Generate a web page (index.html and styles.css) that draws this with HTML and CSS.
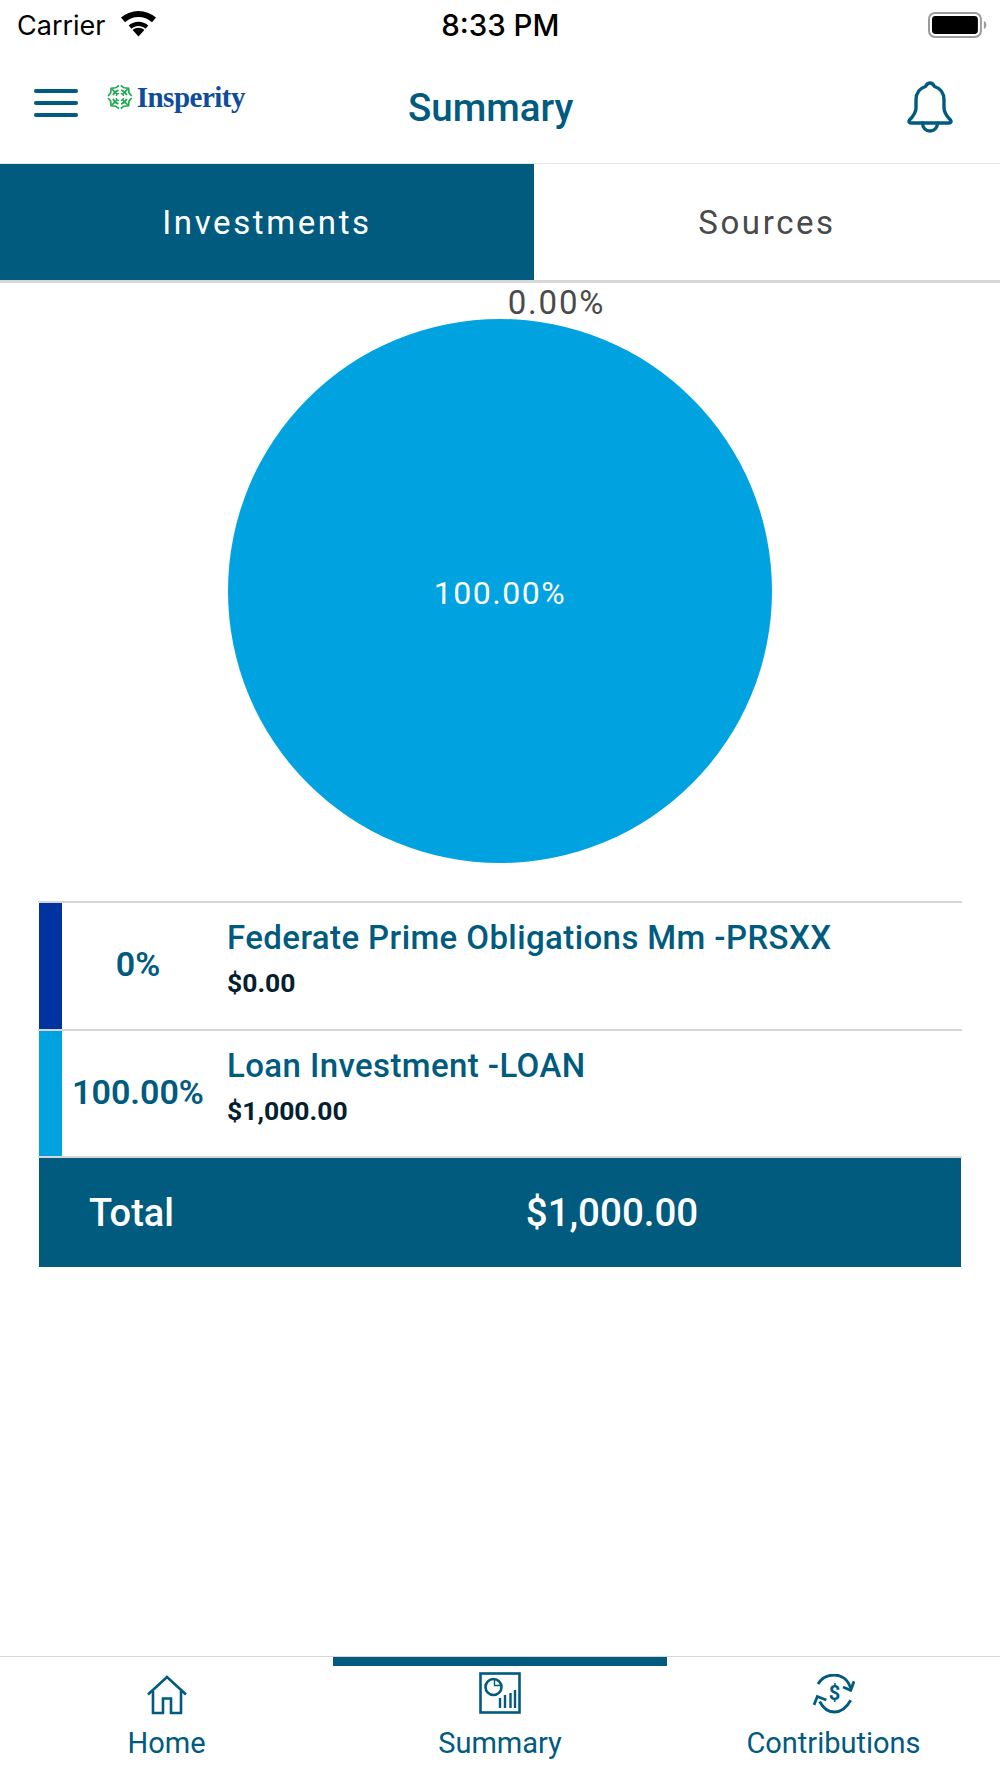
FILE: index.html
```html
<!DOCTYPE html>
<html lang="en">
<head>
    <meta charset="UTF-8">
    <meta name="viewport" content="width=device-width, initial-scale=1.0">
    <title>Summary</title>
    <link rel="stylesheet" href="styles.css">
</head>
<body>
<div class="app">
    <div class="status-bar">
        <div class="carrier">
            <span>Carrier</span>
            <svg class="wifi" width="37" height="27" viewBox="0 0 37 27">
                <path d="M18.5 26.5 L12.6 20 C16 17 21 17 24.4 20 Z" fill="#000"/>
                <path d="M8.7 15.6 C14.5 10.6 22.5 10.6 28.3 15.6 L25.5 18.8 C21.4 15.2 15.6 15.2 11.5 18.8 Z" fill="#000"/>
                <path d="M1 7.6 C11 -1.2 26 -1.2 36 7.6 L32 12.2 C24.4 5.2 12.6 5.2 5 12.2 Z" fill="#000"/>
            </svg>
        </div>
        <div class="clock">8:33 PM</div>
        <svg class="battery" width="60" height="28" viewBox="0 0 60 28">
            <rect x="1" y="2" width="52" height="24" rx="6" fill="#fff" stroke="#9b9b9b" stroke-width="2"/>
            <rect x="4" y="5" width="46" height="18" rx="3.5" fill="#000"/>
            <path d="M56 10 C58 11 58.5 12.5 58.5 14 C58.5 15.5 58 17 56 18 Z" fill="#9b9b9b"/>
        </svg>
    </div>

    <div class="nav-bar">
        <div class="hamburger"><span></span><span></span><span></span></div>
        <div class="logo">
            <svg width="28" height="28" viewBox="0 0 28 28" fill="none" stroke="#1fa84f" stroke-width="1.8">
                <path d="M13 1.500 L9.500 4 L4.500 4.500 L4 9.500 L1.200 13 M15 1.500 L18.500 4 L23.500 4.500 L24 9.500 L26.800 13 M1.200 15 L4 18.500 L4.500 23.500 L9.500 24 L13 26.500 M26.800 15 L24 18.500 L23.500 23.500 L18.500 24 L15 26.500"/>
                <path d="M6.500 12 C7.500 9.500 9.500 7.500 12.500 6.500 M21.500 12 C20.500 9.500 18.500 7.500 15.500 6.500 M6.500 16 C7.500 18.500 9.500 20.500 12.500 21.500 M21.500 16 C20.500 18.500 18.500 20.500 15.500 21.500"/>
                <path d="M5.500 5.500 L11 11 M22.500 5.500 L17 11 M5.500 22.500 L11 17 M22.500 22.500 L17 17"/>
                <path d="M10 13 C10 11.800 11 10.500 13 10 M18 13 C18 11.800 17 10.500 15 10 M10 15 C10 16.200 11 17.500 13 18 M18 15 C18 16.200 17 17.500 15 18" stroke-width="1.400"/>
            </svg>
            <span class="logo-text">Insperity</span>
        </div>
        <div class="nav-title">Summary</div>
        <svg class="bell" width="46" height="52" viewBox="0 0 46 52" fill="none" stroke="#005b7f" stroke-width="3.400" stroke-linejoin="round" stroke-linecap="round">
            <path d="M23 2 C20.500 2 19.500 3.500 18.500 5.500 C12 7.500 9 12.500 9 19 L9 27 C9 32 6 35.500 2.500 39 C1.500 40.500 2 42 4 42 L42 42 C44 42 44.500 40.500 43.500 39 C40 35.500 37 32 37 27 L37 19 C37 12.500 34 7.500 27.500 5.500 C26.500 3.500 25.500 2 23 2 Z"/>
            <path d="M15.500 42 C15.500 47 19 50 23 50 C27 50 30.500 47 30.500 42"/>
        </svg>
    </div>

    <div class="tabs">
        <div class="tab active">Investments</div>
        <div class="tab">Sources</div>
    </div>

    <div class="chart">
        <div class="chart-small-label">0.00%</div>
        <div class="pie">100.00%</div>
    </div>

    <div class="fund-list">
        <div class="fund-row">
            <div class="swatch navy"></div>
            <div class="fund-pct">0%</div>
            <div class="fund-info">
                <div class="fund-name">Federate Prime Obligations Mm -PRSXX</div>
                <div class="fund-amount">$0.00</div>
            </div>
        </div>
        <div class="fund-row">
            <div class="swatch sky"></div>
            <div class="fund-pct">100.00%</div>
            <div class="fund-info">
                <div class="fund-name">Loan Investment -LOAN</div>
                <div class="fund-amount">$1,000.00</div>
            </div>
        </div>
        <div class="total-row">
            <div class="total-label">Total</div>
            <div class="total-value">$1,000.00</div>
        </div>
    </div>

    <div class="tab-bar">
        <div class="tab-item">
            <svg width="42" height="42" viewBox="0 0 42 42" fill="none" stroke="#005b7f" stroke-width="2.600">
                <path d="M2 20.500 L21 3 L40 20.500"/>
                <path d="M7 17 L7 39 L17 39 L17 24.500 L25 24.500 L25 39 L35 39 L35 17"/>
            </svg>
            <span>Home</span>
        </div>
        <div class="tab-item current">
            <svg width="42" height="42" viewBox="0 0 42 42" fill="none" stroke="#005b7f">
                <rect x="1.500" y="1.500" width="39" height="39" stroke-width="2.600"/>
                <circle cx="14.500" cy="15" r="8" stroke-width="2.600"/>
                <path d="M15.500 7 L15.500 13.500 L22 13.500" stroke-width="1.400"/>
                <path d="M21 36 L21 26 M26 36 L26 23 M31.500 36 L31.500 21 M36 36 L36 18" stroke-width="2.400"/>
            </svg>
            <span>Summary</span>
        </div>
        <div class="tab-item">
            <svg width="42" height="42" viewBox="0 0 42 42" fill="none" stroke="#005b7f" stroke-width="2.800">
                <path d="M5 10 C9 3 15 1 21.500 1 C28 1 35 5 37.500 14"/>
                <path d="M30 13 L37.700 16.300 L41 7.300"/>
                <path d="M37.700 26.300 C34 33 28 38 21.500 38 C15 38 10 34 6.700 27.500"/>
                <path d="M13.300 26 L4.300 22.500 L1 31"/>
                <text x="21.500" y="25.500" text-anchor="middle" class="dollar">$</text>
            </svg>
            <span>Contributions</span>
        </div>
    </div>
</div>
</body>
</html>
```

FILE: styles.css
```css
:root {
    --teal: #005b7f;
    --sky: #00a3e0;
    --navy: #0033a0;
    --line: #d6d6d6;
}

body {
    margin: 0;
    background-color: #fff;
    font-family: 'Roboto', sans-serif;
}

.app {
    display: flex;
    flex-direction: column;
    height: 1778px;
    overflow: hidden;
}

.status-bar {
    display: flex;
    align-items: center;
    height: 50px;
    padding: 0 12px 0 17px;
    color: #000;
    font-family: 'Inter', sans-serif;
    font-size: 27px;
}

.carrier {
    display: flex;
    align-items: center;
    gap: 14px;
    width: 425px;
}

.wifi {
    margin-top: -4px;
}

.clock {
    font-weight: 500;
    font-size: 29.500px;
    width: 488px;
}

.nav-bar {
    display: flex;
    align-items: center;
    height: 113px;
    padding: 0 47px 0 34px;
    border-bottom: 1px solid #e6e6e6;
}

.hamburger {
    display: flex;
    flex-direction: column;
    gap: 8px;
    width: 44px;
    margin-top: -8px;
}

.hamburger span {
    height: 4px;
    border-radius: 2px;
    background-color: var(--teal);
}

.logo {
    display: flex;
    align-items: center;
    gap: 4px;
    width: 138px;
    margin-left: 29px;
    margin-top: -19px;
}

.logo-text {
    font-family: 'Liberation Serif', serif;
    font-weight: bold;
    font-size: 29px;
    letter-spacing: -0.5px;
    color: #0f4c9c;
}

.nav-title {
    margin-left: 163px;
    margin-top: 2px;
    color: var(--teal);
    font-size: 38.500px;
    font-weight: 500;
}

.bell {
    margin-left: auto;
    margin-top: 1px;
}

.tabs {
    display: flex;
    height: 116px;
    border-bottom: 3px solid var(--line);
}

.tab {
    flex: 1;
    display: flex;
    align-items: center;
    justify-content: center;
    color: #4a4a4a;
    font-size: 33px;
    letter-spacing: 2.600px;
}

.tab.active {
    flex: 0 0 534px;
    background-color: var(--teal);
    color: #fff;
}

.chart {
    display: flex;
    flex-direction: column;
    align-items: center;
    height: 618px;
}

.chart-small-label {
    height: 36px;
    line-height: 40px;
    margin-left: 113px;
    color: #4a4a4a;
    font-size: 33px;
    letter-spacing: 1.800px;
}

.pie {
    display: flex;
    align-items: center;
    justify-content: center;
    box-sizing: border-box;
    width: 544px;
    height: 544px;
    padding-top: 4px;
    border-radius: 50%;
    background-color: var(--sky);
    color: #fff;
    font-size: 32px;
    letter-spacing: 1.500px;
}

.fund-list {
    margin: 0 38px;
}

.fund-row {
    display: flex;
    height: 125.500px;
    border-top: 2px solid var(--line);
}

.fund-row:nth-child(2) {
    border-bottom: 2px solid var(--line);
}

.swatch {
    width: 23px;
    margin-left: 1px;
}

.swatch.navy {
    background-color: var(--navy);
}

.swatch.sky {
    background-color: var(--sky);
}

.fund-pct {
    display: flex;
    align-items: center;
    justify-content: center;
    width: 152px;
    padding-bottom: 3px;
    color: var(--teal);
    font-size: 34px;
    font-weight: 600;
}

.fund-info {
    padding: 15px 0 0 13px;
}

.fund-name {
    color: var(--teal);
    font-size: 33px;
    font-weight: 500;
    letter-spacing: 0.400px;
}

.fund-amount {
    margin-top: 10px;
    color: #04202e;
    font-size: 26.500px;
    font-weight: 700;
}

.total-row {
    display: flex;
    align-items: center;
    height: 109px;
    margin: 0 1px;
    background-color: var(--teal);
    color: #fff;
    font-size: 38.500px;
    font-weight: 500;
}

.total-label {
    width: 300px;
    padding-left: 50px;
    font-size: 38px;
}

.total-value {
    width: 446px;
    text-align: center;
}

.tab-bar {
    display: grid;
    grid-template-columns: 333px 334px 333px;
    margin-top: auto;
    height: 121px;
    border-top: 1px solid var(--line);
}

.tab-item {
    display: flex;
    flex-direction: column;
    align-items: center;
    gap: 10px;
    padding-top: 17px;
    color: var(--teal);
    font-size: 29px;
}

.tab-item.current {
    border-top: 9px solid var(--teal);
    padding-top: 6px;
    gap: 12px;
}

.dollar {
    fill: #005b7f;
    stroke: none;
    font-family: 'Roboto', sans-serif;
    font-weight: 700;
    font-size: 20px;
}
```
